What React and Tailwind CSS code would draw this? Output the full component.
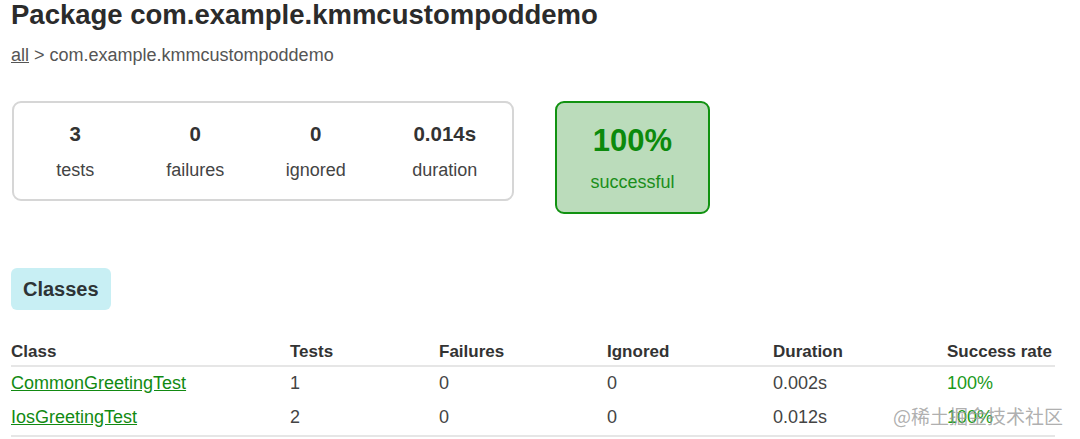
import React from 'react';

const rows = [
  { name: 'CommonGreetingTest', tests: 1, failures: 0, ignored: 0, duration: '0.002s', rate: '100%' },
  { name: 'IosGreetingTest', tests: 2, failures: 0, ignored: 0, duration: '0.012s', rate: '100%' },
];

function Counter({ value, label, className }) {
  return (
    <div className={`flex flex-col items-center ${className}`}>
      <div className="text-[20.5px] font-bold leading-[20px] text-[#333]">{value}</div>
      <div className="mt-[17px] text-[18px] leading-[18px] text-[#444]">{label}</div>
    </div>
  );
}

export default function App() {
  return (
    <div className="relative w-[1080px] h-[439px] overflow-hidden bg-white font-['Liberation_Sans',Arial,sans-serif] text-[#333]">
      <div className="pl-[11px] pr-[25px]">
        <h1 className="text-[27.5px] font-bold leading-[30px] text-[#2b2b2b]">Package com.example.kmmcustompoddemo</h1>
        <div className="mt-[15px] text-[18px] leading-[20px] text-[#555]">
          <span className="underline">all</span> &gt; com.example.kmmcustompoddemo
        </div>

        <div className="mt-[36px] flex items-start gap-[41px]">
          <div className="w-[502px] h-[100px] ml-[1px] rounded-[9px] border-2 border-[#d6d6d6] pt-[21px]">
            <div className="flex w-full">
              <Counter value="3" label="tests" className="w-[123px]" />
              <Counter value="0" label="failures" className="w-[118px]" />
              <Counter value="0" label="ignored" className="w-[124px]" />
              <Counter value="0.014s" label="duration" className="w-[135px]" />
            </div>
          </div>
          <div className="w-[155px] h-[113px] rounded-[9px] border-2 border-[#119211] bg-[#bbdcbb] flex flex-col items-center pt-[22px]">
            <div className="text-[31px] font-bold leading-[31px] text-[#0c8a0c]">100%</div>
            <div className="mt-[17px] text-[18px] leading-[18px] text-[#1a8e1a]">successful</div>
          </div>
        </div>

        <div className="mt-[54px] inline-flex h-[42px] items-center rounded-[6px] bg-[#c8eff4] px-[12px] text-[20px] font-bold text-[#2e3436]">
          Classes
        </div>

        <table className="mt-[32px] w-[1044px] border-collapse text-[18px] text-left">
          <thead>
            <tr className="border-b-2 border-[#e6e6e6]">
              <th className="w-[279px] pb-[3px] text-[17px] font-bold leading-[20px] text-[#333]">Class</th>
              <th className="w-[149px] pb-[3px] text-[17px] font-bold leading-[20px] text-[#333]">Tests</th>
              <th className="w-[168px] pb-[3px] text-[17px] font-bold leading-[20px] text-[#333]">Failures</th>
              <th className="w-[166px] pb-[3px] text-[17px] font-bold leading-[20px] text-[#333]">Ignored</th>
              <th className="w-[174px] pb-[3px] text-[17px] font-bold leading-[20px] text-[#333]">Duration</th>
              <th className="pb-[3px] text-[17px] font-bold leading-[20px] text-[#333]">Success rate</th>
            </tr>
          </thead>
          <tbody>
            {rows.map((r, i) => (
              <tr key={r.name} className={i === rows.length - 1 ? 'border-b-2 border-[#e6e6e6]' : ''}>
                <td className="h-[35px] pb-[2px] align-middle">
                  <span className="underline text-[#128a12]">{r.name}</span>
                </td>
                <td className="pb-[2px] text-[#444]">{r.tests}</td>
                <td className="pb-[2px] text-[#444]">{r.failures}</td>
                <td className="pb-[2px] text-[#444]">{r.ignored}</td>
                <td className="pb-[2px] text-[#444]">{r.duration}</td>
                <td className="pb-[2px] text-[#1a9a1a]">{r.rate}</td>
              </tr>
            ))}
          </tbody>
        </table>
      </div>

      <div className="absolute left-[893px] top-[406px] text-[19px] leading-none text-[#9a9a9a]/80 font-['Noto_Sans_CJK_SC',sans-serif]">
        @稀土掘金技术社区
      </div>
    </div>
  );
}
